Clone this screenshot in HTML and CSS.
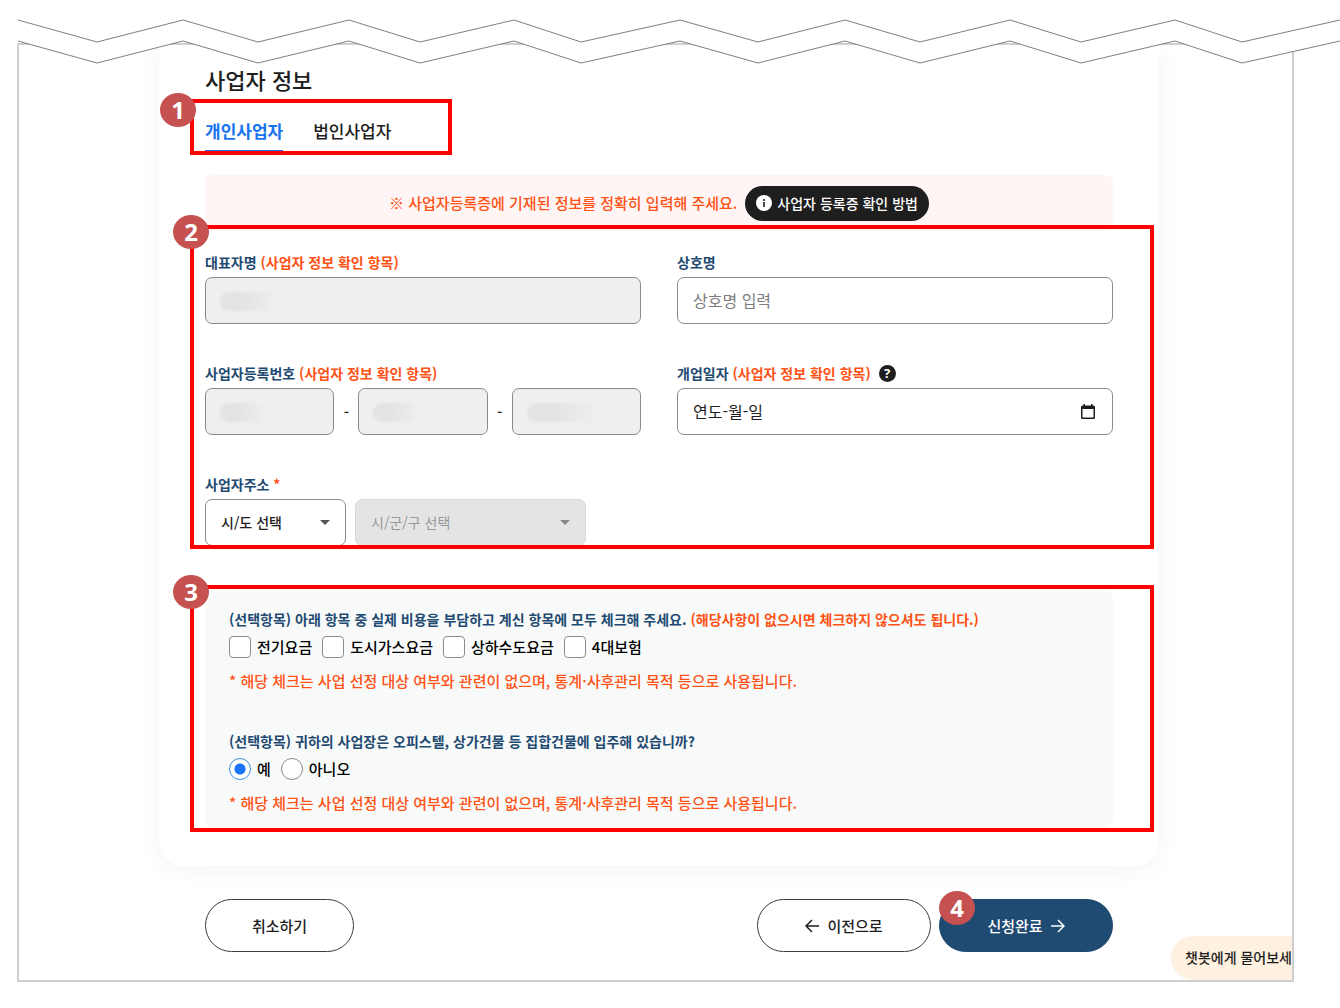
FILE: index.html
```html
<!DOCTYPE html>
<html lang="ko">

<head>
    <meta charset="UTF-8">
    <meta name="viewport" content="width=device-width, initial-scale=1.0">
    <title>사업자 정보</title>
    <link rel="stylesheet" href="styles.css">
</head>

<body>
    <svg class="tear" viewBox="0 0 1340 70" preserveAspectRatio="none" aria-hidden="true">
        <polygon fill="#fff" points="0,0 0,41 18,41 97,63 183,41 258,63 349,41 420,63 514,41 581,63 680,41 758,63 845,41 920,63 1010,41 1081,63 1175,41 1242,63 1340,41 1340,0" />
        <polyline points="18,20 97,42 183,20 258,42 349,20 420,42 514,20 581,42 680,20 758,42 845,20 920,42 1010,20 1081,42 1175,20 1242,42 1340,20" />
        <polyline points="18,41 97,63 183,41 258,63 349,41 420,63 514,41 581,63 680,41 758,63 845,41 920,63 1010,41 1081,63 1175,41 1242,63 1340,41" />
    </svg>

    <main class="page">
        <form class="apply-form">
            <div class="card">
                <h1>사업자 정보</h1>

                <nav class="tabs step">
                    <span class="outline outline-tabs"><span class="num">1</span></span>
                    <a class="tab active" href="#personal">개인사업자</a>
                    <a class="tab" href="#corporate">법인사업자</a>
                </nav>

                <div class="notice">
                    <p>※ 사업자등록증에 기재된 정보를 정확히 입력해 주세요.</p>
                    <button type="button" class="guide-btn">
                        <svg width="16" height="16" viewBox="0 0 16 16" aria-hidden="true">
                            <circle cx="8" cy="8" r="8" fill="#fff" />
                            <path d="M8 7v5M8 4v2" stroke="#1e1e1e" stroke-width="1.6" />
                        </svg>
                        사업자 등록증 확인 방법
                    </button>
                </div>

                <div class="fields step">
                    <span class="outline outline-fields"><span class="num">2</span></span>
                    <div class="field">
                        <label for="ownerName">대표자명 <em>(사업자 정보 확인 항목)</em></label>
                        <div class="masked">
                            <input type="text" id="ownerName" disabled>
                            <span class="smudge"></span>
                        </div>
                    </div>
                    <div class="field">
                        <label for="storeName">상호명</label>
                        <input type="text" id="storeName" placeholder="상호명 입력">
                    </div>
                    <div class="field">
                        <label for="bizNo1">사업자등록번호 <em>(사업자 정보 확인 항목)</em></label>
                        <div class="biz-no">
                            <div class="masked">
                                <input type="text" id="bizNo1" disabled>
                                <span class="smudge"></span>
                            </div>
                            <span class="dash">-</span>
                            <div class="masked">
                                <input type="text" aria-label="사업자등록번호 가운데 자리" disabled>
                                <span class="smudge"></span>
                            </div>
                            <span class="dash">-</span>
                            <div class="masked">
                                <input type="text" aria-label="사업자등록번호 끝자리" disabled>
                                <span class="smudge wide"></span>
                            </div>
                        </div>
                    </div>
                    <div class="field">
                        <div class="label-row">
                            <label for="openDate">개업일자 <em>(사업자 정보 확인 항목)</em></label>
                            <button type="button" class="help-btn" aria-label="도움말">?</button>
                        </div>
                        <div class="date-box">
                            <input type="text" id="openDate" class="date" placeholder="연도-월-일">
                            <button type="button" class="calendar-btn" aria-label="날짜 선택">
                                <svg width="14" height="15" viewBox="0 0 14 15" aria-hidden="true">
                                    <path fill="#1e1e1e" fill-rule="evenodd" d="M2.500 0h1.500v1.500h6V0h1.500v1.500h1A1.500 1.500 0 0 1 14 3v10.500a1.500 1.500 0 0 1-1.500 1.500h-11A1.500 1.500 0 0 1 0 13.500V3a1.500 1.500 0 0 1 1.500-1.500h1zM1.500 5v8.500h11V5z" />
                                </svg>
                            </button>
                        </div>
                    </div>
                    <div class="field">
                        <label for="sido">사업자주소 <em>*</em></label>
                        <div class="address">
                            <select id="sido" class="sido">
                                <option>시/도 선택</option>
                            </select>
                            <select class="sigungu" aria-label="시/군/구" disabled>
                                <option>시/군/구 선택</option>
                            </select>
                        </div>
                    </div>
                </div>

                <div class="options step">
                    <span class="outline outline-options"><span class="num">3</span></span>
                    <fieldset>
                        <legend>(선택항목) 아래 항목 중 실제 비용을 부담하고 계신 항목에 모두 체크해 주세요. <em>(해당사항이 없으시면 체크하지 않으셔도 됩니다.)</em></legend>
                        <div class="choices">
                            <label><input type="checkbox" name="cost"> 전기요금</label>
                            <label><input type="checkbox" name="cost"> 도시가스요금</label>
                            <label><input type="checkbox" name="cost"> 상하수도요금</label>
                            <label><input type="checkbox" name="cost"> 4대보험</label>
                        </div>
                        <p class="hint">* 해당 체크는 사업 선정 대상 여부와 관련이 없으며, 통계·사후관리 목적 등으로 사용됩니다.</p>
                    </fieldset>
                    <fieldset>
                        <legend>(선택항목) 귀하의 사업장은 오피스텔, 상가건물 등 집합건물에 입주해 있습니까?</legend>
                        <div class="choices">
                            <label><input type="radio" name="building" checked> 예</label>
                            <label><input type="radio" name="building"> 아니오</label>
                        </div>
                        <p class="hint">* 해당 체크는 사업 선정 대상 여부와 관련이 없으며, 통계·사후관리 목적 등으로 사용됩니다.</p>
                    </fieldset>
                </div>
            </div>

            <div class="actions">
                <button type="button" class="btn btn-cancel">취소하기</button>
                <button type="button" class="btn">
                    <svg width="14" height="14" viewBox="0 0 14 14" aria-hidden="true">
                        <path d="M14 7H1M7 1L1 7l6 6" />
                    </svg>
                    이전으로
                </button>
                <div class="step">
                    <button type="submit" class="btn btn-primary">
                        신청완료
                        <svg width="14" height="14" viewBox="0 0 14 14" aria-hidden="true">
                            <path d="M0 7h13M7 1l6 6-6 6" />
                        </svg>
                    </button>
                    <span class="num num-submit">4</span>
                </div>
            </div>
        </form>

        <a class="chatbot" href="#chatbot">챗봇에게 물어보세</a>
    </main>
</body>

</html>
```

FILE: styles.css
```css
* {
    box-sizing: border-box;
}

body {
    margin: 0;
    background-color: #fff;
    color: #1e1e1e;
    font-family: "Noto Sans CJK KR", sans-serif;
    font-size: 15px;
    font-weight: 500;
    line-height: 24px;
}

button,
input,
select {
    font: inherit;
    color: inherit;
}

em {
    color: #ff5216;
    font-style: normal;
}

p {
    margin: 0;
}

/* torn edge over the top of the page */
.tear {
    position: absolute;
    top: 0;
    left: 0;
    width: 100%;
    height: 70px;
    z-index: 2;
}

.tear polyline {
    fill: none;
    stroke: #7f7f7f;
    stroke-width: 1;
}

.page {
    position: relative;
    margin: 43px 46px 24px 17px;
    padding: 0 133px 28px 140px;
    border: 2px solid #cfcfcf;
    overflow: hidden;
}

.card {
    padding: 18px 46px 38px;
    border-radius: 0 0 24px 24px;
    box-shadow: 0 4px 20px rgba(40, 70, 70, 0.06);
}

h1 {
    margin: 0;
    font-size: 22px;
    font-weight: 500;
    line-height: 32px;
}

/* numbered outlines drawn over each section */
.step {
    position: relative;
}

.outline {
    position: absolute;
    border: 4px solid #f00;
    pointer-events: none;
    z-index: 1;
}

.outline-tabs {
    top: -17px;
    bottom: -3px;
    left: -15px;
    width: 262px;
}

.outline-fields {
    top: -27px;
    right: -41px;
    bottom: -3px;
    left: -15px;
}

.outline-options {
    top: -6px;
    right: -41px;
    bottom: -4px;
    left: -15px;
}

.num {
    position: absolute;
    top: -14px;
    left: -21px;
    width: 36px;
    height: 34px;
    border-radius: 50%;
    background-color: #c55150;
    color: #fff;
    font-family: "Noto Sans", sans-serif;
    font-size: 24px;
    font-weight: 700;
    line-height: 34px;
    text-align: center;
}

.outline-tabs .num {
    top: -10px;
    left: -34px;
}

.num-submit {
    top: -8px;
    left: 0;
}

.tabs {
    display: flex;
    gap: 30px;
    margin-top: 21px;
}

.tab {
    padding: 3px 0 7px;
    border-bottom: 2px solid transparent;
    color: #1e1e1e;
    font-size: 17px;
    text-decoration: none;
}

.tab.active {
    border-color: #1873ee;
    color: #1873ee;
    font-weight: 700;
}

.notice {
    display: flex;
    align-items: center;
    justify-content: center;
    gap: 8px;
    height: 56px;
    margin-top: 23px;
    border-radius: 6px;
    background-color: #fff5f4;
    color: #ff5216;
}

.guide-btn {
    display: flex;
    align-items: center;
    gap: 5px;
    height: 35px;
    padding: 0 11px;
    border: 0;
    border-radius: 18px;
    background-color: #1e1e1e;
    color: #fff;
    font-size: 14px;
}

.fields {
    display: grid;
    grid-template-columns: 1fr 1fr;
    gap: 39px 36px;
    margin-top: 21px;
}

.field label {
    display: block;
    margin-bottom: 4px;
    color: #1f4a72;
    font-size: 14px;
    font-weight: 700;
    line-height: 21px;
}

.label-row {
    display: flex;
    gap: 8px;
}

.help-btn {
    width: 17px;
    height: 17px;
    margin-top: 2px;
    padding: 0;
    border: 0;
    border-radius: 50%;
    background-color: #1e1e1e;
    color: #fff;
    font-family: "Noto Sans", sans-serif;
    font-size: 13px;
    font-weight: 700;
    line-height: 17px;
}

.field input,
.field select {
    display: block;
    width: 100%;
    height: 47px;
    padding: 0 15px 2px;
    border: 1px solid #8b8b8b;
    border-radius: 7px;
    background-color: #fff;
    font-size: 16px;
    font-weight: 400;
}

.field input:disabled {
    background-color: #efefef;
}

.field input::placeholder {
    color: #7d7d7d;
    opacity: 1;
}

.field .date::placeholder {
    color: #1e1e1e;
}

.masked,
.date-box {
    position: relative;
}

/* blurred-out personal data */
.smudge {
    position: absolute;
    top: 15px;
    left: 15px;
    width: 58px;
    height: 19px;
    border-radius: 10px;
    background: linear-gradient(90deg, #e2e3e3 40%, #efefef);
    filter: blur(1px);
}

.biz-no .smudge {
    width: 46px;
}

.biz-no .smudge.wide {
    width: 70px;
}

.biz-no {
    display: flex;
    align-items: center;
}

.biz-no .masked {
    flex: 1;
}

.dash {
    width: 24px;
    text-align: center;
}

.calendar-btn {
    position: absolute;
    top: 16px;
    right: 18px;
    padding: 0;
    border: 0;
    background: none;
    line-height: 0;
}

.address {
    display: flex;
    gap: 9px;
}

.field select {
    appearance: none;
    background-image: url("data:image/svg+xml,%3Csvg xmlns='http://www.w3.org/2000/svg' width='10' height='5'%3E%3Cpath d='M0 0h10L5 5z' fill='%23555'/%3E%3C/svg%3E");
    background-position: right 15px center;
    background-repeat: no-repeat;
    font-size: 14px;
    font-weight: 500;
}

.field .sido {
    width: 141px;
}

.field .sigungu {
    width: 231px;
}

.field select:disabled {
    border-color: #d9d9d9;
    background-color: #e4e4e4;
    background-image: url("data:image/svg+xml,%3Csvg xmlns='http://www.w3.org/2000/svg' width='10' height='5'%3E%3Cpath d='M0 0h10L5 5z' fill='%23888'/%3E%3C/svg%3E");
    color: #999;
    font-weight: 400;
    opacity: 1;
}

.options {
    display: flex;
    flex-direction: column;
    gap: 36px;
    margin-top: 45px;
    padding: 16px 24px 13px;
    border-radius: 8px;
    background-color: #f8faf9;
}

fieldset {
    min-width: 0;
    margin: 0;
    padding: 0;
    border: 0;
}

legend {
    padding: 0;
    color: #1f4a72;
    font-size: 14px;
    font-weight: 700;
    line-height: 25px;
}

.choices {
    display: flex;
    gap: 10px;
    margin-top: 3px;
    color: #000;
}

.choices label {
    display: flex;
    align-items: center;
    gap: 6px;
}

.choices input {
    appearance: none;
    width: 22px;
    height: 22px;
    margin: 0;
    border: 1px solid #8b8b8b;
    border-radius: 4px;
    background-color: #fff;
}

.choices input[type="radio"] {
    border-radius: 50%;
}

.choices input[type="radio"]:checked {
    border-color: #3a8fe0;
    background-image: radial-gradient(circle, #1873f5 5px, transparent 6px);
}

.choices input[type="checkbox"]:checked {
    background-color: #1873f5;
}

.hint {
    margin-top: 10px;
    color: #ff5216;
}

.actions {
    display: flex;
    gap: 8px;
    margin-top: 33px;
    padding: 0 46px;
}

.btn {
    display: flex;
    align-items: center;
    justify-content: center;
    gap: 8px;
    width: 174px;
    height: 53px;
    border: 1px solid #3c3c3c;
    border-radius: 27px;
    background-color: #fff;
}

.btn svg {
    fill: none;
    stroke: currentColor;
    stroke-width: 1.5;
}

.btn-cancel {
    width: 149px;
    margin-right: auto;
}

.btn-primary {
    border-color: #1f4a72;
    background-color: #1f4a72;
    color: #fff;
}

/* chatbot bubble docked to the page edge */
.chatbot {
    position: absolute;
    right: 0;
    bottom: 0;
    padding: 9px 0 11px 14px;
    border-radius: 22px 0 0 22px;
    background-color: #fff1df;
    color: #1e1e1e;
    font-size: 14px;
    text-decoration: none;
}
```
